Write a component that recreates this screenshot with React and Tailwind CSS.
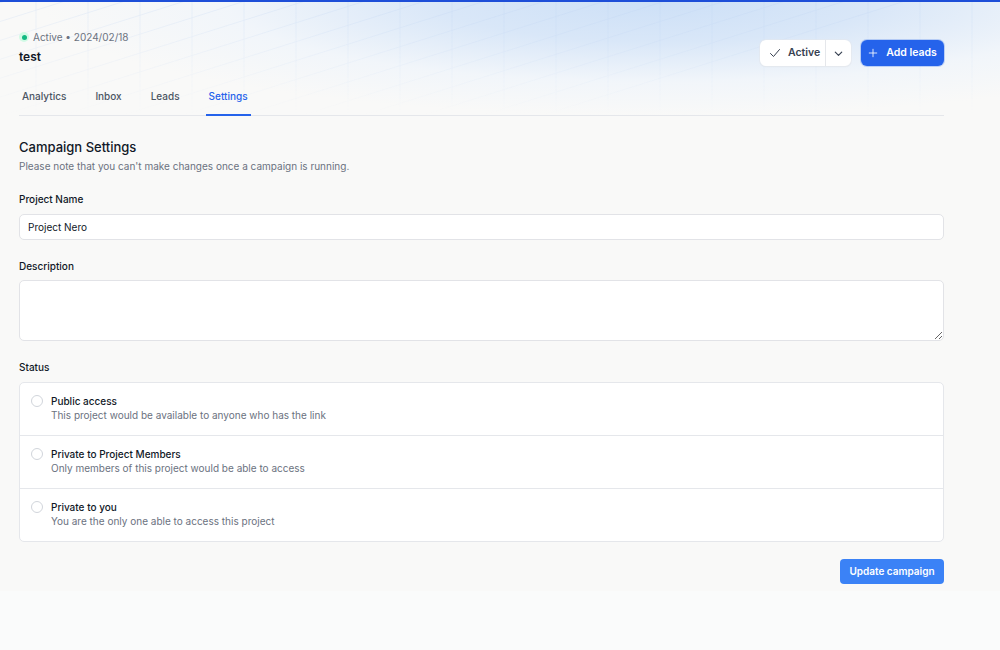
import React from "react";

function HeaderDecoration() {
  const verticals = [];
  for (let x = 36; x < 1000; x += 52) verticals.push(x);
  const diagonals = [];
  for (let i = -6; i < 10; i++) diagonals.push(i * 60);
  return (
    <div className="pointer-events-none absolute inset-0 overflow-hidden">
      <div className="absolute inset-0 bg-[radial-gradient(ellipse_62%_100%_at_66%_0%,#cde0f7_0%,#d9e7f8_35%,rgba(238,244,251,0.7)_70%,rgba(249,249,248,0)_100%)]" />
      <svg className="absolute inset-0 h-full w-full" viewBox="0 0 1000 125" preserveAspectRatio="none">
        <defs>
          <linearGradient id="fade" x1="0" y1="0" x2="0" y2="1">
            <stop offset="0" stopColor="#fff" stopOpacity="1" />
            <stop offset="0.85" stopColor="#fff" stopOpacity="0.2" />
            <stop offset="1" stopColor="#fff" stopOpacity="0" />
          </linearGradient>
          <mask id="m">
            <rect x="0" y="0" width="1000" height="125" fill="url(#fade)" />
          </mask>
        </defs>
        <g mask="url(#m)" stroke="#b9cff0" strokeWidth="0.7" opacity="0.35">
          {verticals.map((x) => (
            <line key={x} x1={x} y1="0" x2={x} y2="125" />
          ))}
          {diagonals.map((d) => (
            <line key={d} x1={d} y1="125" x2={d + 420} y2="-20" />
          ))}
        </g>
      </svg>
    </div>
  );
}

function CheckIcon() {
  return (
    <svg width="12" height="12" viewBox="0 0 24 24" fill="none" stroke="#374151" strokeWidth="2" strokeLinecap="round" strokeLinejoin="round">
      <path d="M3 13l6 6L21 5" />
    </svg>
  );
}

function ChevronIcon() {
  return (
    <svg width="11" height="11" viewBox="0 0 24 24" fill="none" stroke="#374151" strokeWidth="2.6" strokeLinecap="round" strokeLinejoin="round">
      <path d="M5 9l7 7 7-7" />
    </svg>
  );
}

function PlusIcon() {
  return (
    <svg width="10" height="10" viewBox="0 0 24 24" fill="none" stroke="#ffffff" strokeWidth="2" strokeLinecap="round">
      <path d="M12 3v18M3 12h18" />
    </svg>
  );
}

const tabs = ["Analytics", "Inbox", "Leads", "Settings"];

const options = [
  { title: "Public access", desc: "This project would be available to anyone who has the link" },
  { title: "Private to Project Members", desc: "Only members of this project would be able to access" },
  { title: "Private to you", desc: "You are the only one able to access this project" },
];

export default function App() {
  return (
    <div className="min-h-[650px] bg-[#fafbfb] text-[#111827] [font-family:Inter,'Noto_Sans',sans-serif]">
      <div className="bg-[#f9f9f8] pb-[7px]">
        <div className="h-[2px] bg-[#1d4ed8]" />
        <div className="relative">
          <HeaderDecoration />
          <div className="relative w-[944px] pl-[19px] pt-[27px]">
            <div className="flex items-end justify-between">
              <div>
                <div className="flex items-center gap-[4px] text-[10px] leading-4 text-[#6b7280]">
                  <span className="flex h-[10px] w-[10px] items-center justify-center rounded-full bg-[#d1fae5]">
                    <span className="h-[5px] w-[5px] rounded-full bg-[#10b981]" />
                  </span>
                  <span>Active • 2024/02/18</span>
                </div>
                <div className="mt-[2px] text-[12px] font-semibold leading-5 text-[#111827]">test</div>
              </div>
              <div className="mb-[1px] flex items-center gap-[10px]">
                <div className="flex h-[26px] items-stretch rounded-[6px] bg-white shadow-[0_0_0_1px_rgba(229,231,235,0.5),0_1px_2px_rgba(0,0,0,0.04)]">
                  <div className="flex w-[65px] items-center gap-[7px] pl-[9px]">
                    <CheckIcon />
                    <span className="text-[10.5px] font-semibold text-[#374151]">Active</span>
                  </div>
                  <div className="w-px bg-[#e5e7eb]" />
                  <div className="flex w-[25px] items-center justify-center">
                    <ChevronIcon />
                  </div>
                </div>
                <div className="flex h-[26px] w-[83px] items-center justify-center gap-[8px] rounded-[6px] bg-[#2563eb] shadow-[0_0_0_1px_rgba(37,99,235,0.25)]">
                  <PlusIcon />
                  <span className="text-[10.5px] font-semibold text-white">Add leads</span>
                </div>
              </div>
            </div>
            <div className="mt-[21px] flex gap-[23px] border-b border-[#e5e7eb]">
              {tabs.map((t) => (
                <div
                  key={t}
                  className={
                    t === "Settings"
                      ? "-mb-px border-b-2 border-[#2563eb] px-[3px] pb-[10px] text-[10px] font-medium leading-[16px] text-[#2563eb]"
                      : "-mb-px border-b-2 border-transparent px-[3px] pb-[10px] text-[10px] font-medium leading-[16px] text-[#4b5563]"
                  }
                >
                  {t}
                </div>
              ))}
            </div>
          </div>
        </div>

        <div className="w-[944px] pl-[19px] pt-[21px]">
          <div className="text-[13px] font-medium leading-5 text-[#111827]">Campaign Settings</div>
          <div className="mt-px text-[10px] leading-4 text-[#6b7280]">
            Please note that you can't make changes once a campaign is running.
          </div>

          <div className="mt-[17px] text-[10px] font-medium leading-4 text-[#111827]">Project Name</div>
          <div className="mt-[7px] flex h-[26px] items-center rounded-[5px] border border-[#e2e3e7] bg-white pl-[8px] text-[10px] text-[#111827]">
            Project Nero
          </div>

          <div className="mt-[18px] text-[10px] font-medium leading-4 text-[#111827]">Description</div>
          <textarea
            className="mt-[6px] block h-[61px] w-full rounded-[5px] border border-[#e2e3e7] bg-white px-[8px] py-[6px] text-[10px] outline-none"
            defaultValue=""
          />

          <div className="mt-[18px] text-[10px] font-medium leading-4 text-[#111827]">Status</div>
          <div className="mt-[7px] rounded-[5px] border border-[#e5e7eb] bg-white">
            {options.map((o, i) => (
              <div
                key={o.title}
                className={
                  i === 0
                    ? "flex items-start gap-[8px] pb-[13px] pl-[11px] pt-[11px]"
                    : "flex items-start gap-[8px] border-t border-[#e5e7eb] pb-[13px] pl-[11px] pt-[11px]"
                }
              >
                <span className="mt-[1px] h-[12px] w-[12px] shrink-0 rounded-full border border-[#d1d5db] bg-white" />
                <div>
                  <div className="text-[10px] font-medium leading-[14px] text-[#111827]">{o.title}</div>
                  <div className="text-[10px] leading-[14px] text-[#6b7280]">{o.desc}</div>
                </div>
              </div>
            ))}
          </div>

          <div className="mt-[17px] flex justify-end">
            <div className="flex h-[25px] w-[104px] items-center justify-center rounded-[4px] bg-[#3b82f6] text-[10px] font-semibold text-white">
              Update campaign
            </div>
          </div>
        </div>
      </div>
    </div>
  );
}
